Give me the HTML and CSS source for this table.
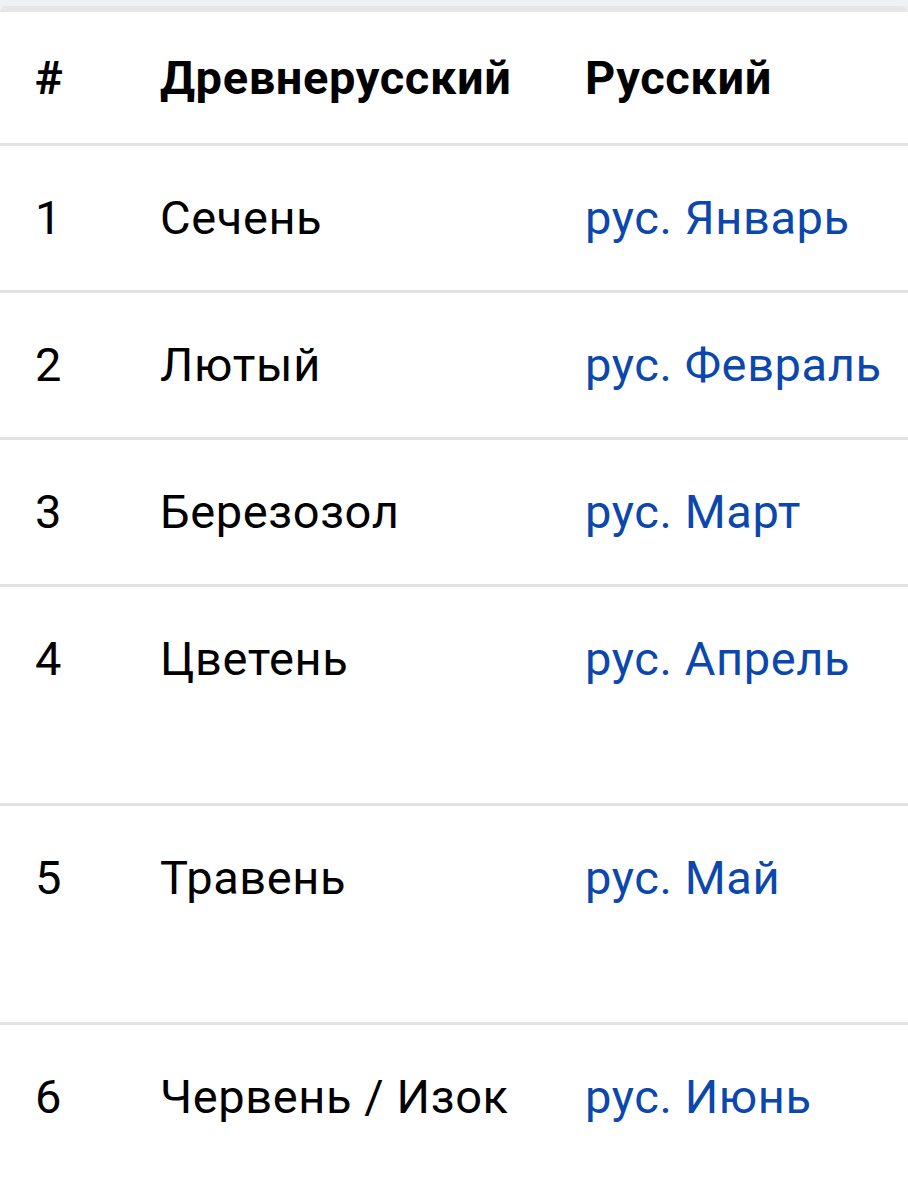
FILE: index.html
```html
<!DOCTYPE html>
<html lang="ru">
<head>
<meta charset="utf-8">
<link rel="stylesheet" href="styles.css">
</head>
<body>
<div class="page">
  <div class="card">
    <table class="months">
      <thead>
        <tr><th class="num">#</th><th class="old">Древнерусский</th><th class="ru">Русский</th></tr>
      </thead>
      <tbody>
        <tr><td class="num">1</td><td class="old">Сечень</td><td class="ru"><a href="#">рус. Январь</a></td></tr>
        <tr><td class="num">2</td><td class="old">Лютый</td><td class="ru"><a href="#">рус. Февраль</a></td></tr>
        <tr><td class="num">3</td><td class="old">Березозол</td><td class="ru"><a href="#">рус. Март</a></td></tr>
        <tr class="tall"><td class="num">4</td><td class="old">Цветень</td><td class="ru"><a href="#">рус. Апрель</a></td></tr>
        <tr class="tall"><td class="num">5</td><td class="old">Травень</td><td class="ru"><a href="#">рус. Май</a></td></tr>
        <tr><td class="num">6</td><td class="old">Червень / Изок</td><td class="ru"><a href="#">рус. Июнь</a></td></tr>
      </tbody>
    </table>
  </div>
</div>
</body>
</html>
```
FILE: styles.css
```css
html, body {
  margin: 0;
  padding: 0;
  background: #ffffff;
}
.page {
  background: #eff1f3;
  padding-top: 6px;
  min-height: 1192px;
  box-sizing: border-box;
}
.card {
  background: #ffffff;
  border-top: 6px solid #e6e6e6;
  border-radius: 6px 6px 0 0;
  min-height: 1180px;
}
.months {
  width: 100%;
  border-collapse: collapse;
  table-layout: fixed;
  font-family: Roboto, "Noto Sans", sans-serif;
  font-size: 47px;
  letter-spacing: 0.6px;
  line-height: 55px;
  color: #000000;
}
.months th,
.months td {
  text-align: left;
  vertical-align: top;
  padding: 44px 0 45px 0;
  white-space: nowrap;
}
.months th {
  font-weight: 700;
  padding: 38px 0 38px 0;
}
.months thead tr,
.months tbody tr {
  border-bottom: 3px solid #e2e2e2;
}
.months tbody tr:last-child {
  border-bottom: none;
}
.months tr.tall td {
  padding-bottom: 117px;
}
.num {
  width: 125px;
  padding-left: 35px !important;
}
.old {
  width: 425px;
}
.ru a {
  color: #0b47ad;
  text-decoration: none;
}
```
